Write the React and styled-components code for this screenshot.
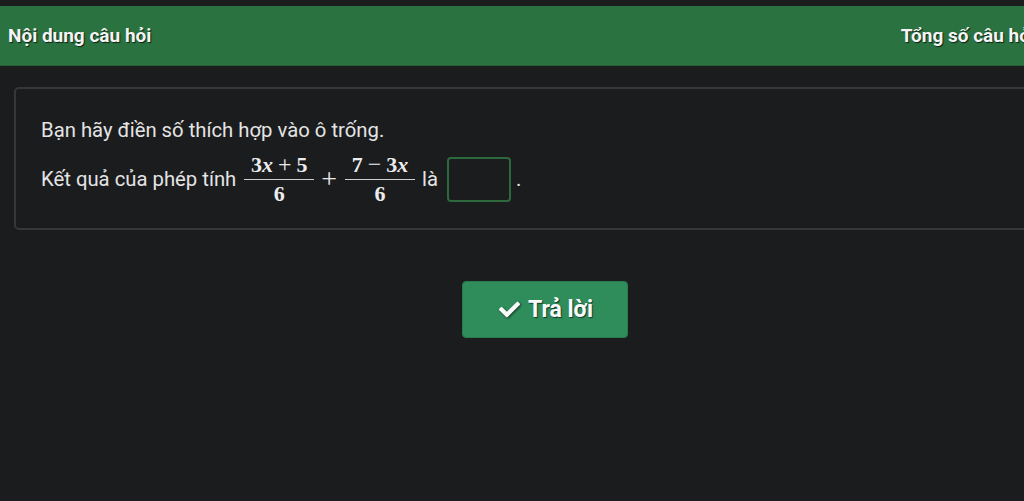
import React from 'react';
import styled, {createGlobalStyle} from 'styled-components';
import {FaCheck} from 'react-icons/fa';

const GlobalStyle = createGlobalStyle`
    html, body {
        margin: 0;
        padding: 0;
        background: #1b1c1e;
        overflow: hidden;
    }
    body {
        font-family: Roboto, "Liberation Sans", Arial, sans-serif;
        color: #e6e6e6;
    }
`;

const Page = styled.div`
    width: 1090px;
    padding-top: 6px;
    display: flex;
    flex-direction: column;
`;

const Header = styled.div`
    height: 60px;
    background: #2a7240;
    display: flex;
    align-items: center;
    justify-content: space-between;
    padding: 0 34px 0 8px;
    border-bottom: 1px solid #245f36;
    box-sizing: border-box;
`;

const HeaderTitle = styled.div`
    font-size: 19px;
    font-weight: 700;
    color: #f4f4f4;
    text-shadow: 1px 1px 1px rgba(0, 0, 0, 0.7);
`;

const Card = styled.div`
    margin: 21px 14px 0;
    height: 143px;
    box-sizing: border-box;
    border: 2px solid #36373a;
    border-radius: 5px;
    padding: 29px 25px 0;
    display: flex;
    flex-direction: column;
    gap: 10px;
`;

const Line = styled.div`
    font-size: 20.3px;
    line-height: 24px;
    color: #e4e4e4;
    display: flex;
    align-items: center;
`;

const Frac = styled.span`
    display: inline-flex;
    flex-direction: column;
    align-items: center;
    margin: 0 7px 0 8px;
    font-family: "Liberation Serif", "DejaVu Serif", serif;
    font-weight: 700;
    font-size: 22px;
    color: #ececec;
`;

const Num = styled.span`
    min-width: 62px;
    text-align: center;
    padding: 0 4px 2px;
    border-bottom: 1px solid #cfcfcf;
    line-height: 24px;
    white-space: nowrap;
`;

const Den = styled.span`
    padding-top: 2px;
    line-height: 24px;
`;

const Var = styled.i`
    font-style: italic;
`;

const InnerOp = styled.span`
    font-weight: 400;
    font-size: 24px;
    margin: 0 5px;
`;

const Op = styled.span`
    font-family: "Liberation Serif", serif;
    font-size: 28px;
    line-height: 24px;
    color: #e8e8e8;
`;

const Blank = styled.span`
    display: inline-block;
    width: 60px;
    height: 41px;
    border: 2px solid #2c6a3d;
    border-radius: 4px;
    margin: 0 5px 0 9px;
`;

const Actions = styled.div`
    display: flex;
    justify-content: center;
    padding-top: 51px;
`;

const AnswerButton = styled.button`
    width: 166px;
    height: 57px;
    background: #2f8c5b;
    border: 1px solid #2a7a4f;
    border-radius: 4px;
    color: #fafafa;
    font-family: Roboto, "Liberation Sans", Arial, sans-serif;
    font-size: 23px;
    font-weight: 700;
    display: flex;
    align-items: center;
    justify-content: center;
    gap: 8px;
    padding: 0 0 0 2px;
    text-shadow: 1px 1px 1px rgba(0, 0, 0, 0.6);
    cursor: pointer;

    svg {
        font-size: 21px;
        filter: drop-shadow(1px 1px 1px rgba(0, 0, 0, 0.6));
    }
`;

export default function App() {
    return (
        <>
            <GlobalStyle />
            <Page>
                <Header>
                    <HeaderTitle>Nội dung câu hỏi</HeaderTitle>
                    <HeaderTitle>Tổng số câu hỏi: 1</HeaderTitle>
                </Header>
                <Card>
                    <Line>Bạn hãy điền số thích hợp vào ô trống.</Line>
                    <Line>
                        Kết quả của phép tính
                        <Frac>
                            <Num>3<Var>x</Var><InnerOp>+</InnerOp>5</Num>
                            <Den>6</Den>
                        </Frac>
                        <Op>+</Op>
                        <Frac>
                            <Num>7<InnerOp>−</InnerOp>3<Var>x</Var></Num>
                            <Den>6</Den>
                        </Frac>
                        là
                        <Blank />.
                    </Line>
                </Card>
                <Actions>
                    <AnswerButton>
                        <FaCheck />
                        Trả lời
                    </AnswerButton>
                </Actions>
            </Page>
        </>
    );
}
